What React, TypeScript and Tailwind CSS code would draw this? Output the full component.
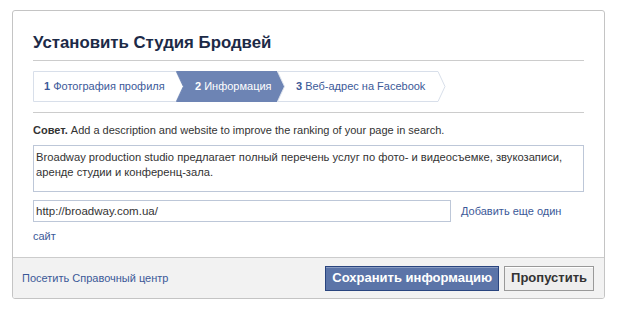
import React from 'react';

const font = { fontFamily: '"Liberation Sans", Arial, sans-serif' };

function Step({ n, label, width, active, first }: { n: number; label: string; width: number; active?: boolean; first?: boolean }) {
  const w = width;
  const pts = first
    ? `0.5,0.5 ${w - 8},0.5 ${w - 1},15.5 ${w - 8},30.5 0.5,30.5`
    : `0.5,0.5 ${w - 8},0.5 ${w - 1},15.5 ${w - 8},30.5 0.5,30.5 7.5,15.5`;
  return (
    <div className={`relative h-[31px] flex items-center ${first ? 'pl-[11px]' : '-ml-[8px] pl-[19px]'}`} style={{ width: w }}>
      <svg className="absolute inset-0" width={w} height={31} viewBox={`0 0 ${w} 31`}>
        <polygon
          points={pts}
          fill={active ? '#6d84b4' : '#ffffff'}
          stroke={active ? '#6d84b4' : '#d8dfea'}
          strokeWidth={1}
        />
      </svg>
      <span className={`relative text-[11px] whitespace-nowrap ${active ? 'text-white' : 'text-[#3b5998]'}`}>
        <b>{n}</b> {label}
      </span>
    </div>
  );
}

export default function App() {
  return (
    <div className="w-[617px] h-[313px] bg-white pt-[10px] pl-[12px]" style={font}>
      <div className="w-[593px] border border-[#c4c4c4] rounded-[3px] bg-white overflow-hidden">
        <div className="px-[20px]">
          {/* заголовок */}
          <div className="pt-[22px] pb-[7px] border-b border-[#cccccc]">
            <h1 className="text-[16.8px] leading-[20px] font-bold text-[#1c2a47]">Установить Студия Бродвей</h1>
          </div>

          {/* шаги */}
          <div className="pt-[10px] pb-[10px] border-b border-[#cccccc] flex">
            <Step n={1} label="Фотография профиля" width={151} first />
            <Step n={2} label="Информация" width={109} active />
            <Step n={3} label="Веб-адрес на Facebook" width={169} />
          </div>

          <p className="mt-[10px] text-[11px] leading-[14px] text-[#333333]">
            <b>Совет.</b> Add a description and website to improve the ranking of your page in search.
          </p>

          <div className="mt-[8px] h-[47px] border border-[#bdc7d8] px-[2px] pt-[4px] text-[11.2px] leading-[15px] text-[#333333]">
            Broadway production studio предлагает полный перечень услуг по фото- и видеосъемке, звукозаписи, аренде студии и конференц-зала.
          </div>

          <div className="mt-[8px] pb-[14px] text-[11px] leading-[14px]">
            <div className="flex items-center">
              <div className="w-[418px] h-[22px] border border-[#bdc7d8] px-[2px] flex items-center text-[11.5px] text-[#333333]">
                http://broadway.com.ua/
              </div>
              <a className="ml-[10px] text-[#3b5998]">Добавить еще один</a>
            </div>
            <a className="block mt-[7px] text-[#3b5998]">сайт</a>
          </div>
        </div>

        {/* нижняя панель */}
        <div className="bg-[#f2f2f2] border-t border-[#cccccc] pl-[9px] pr-[10px] h-[41px] flex items-center justify-between">
          <a className="text-[11px] text-[#3b5998]">Посетить Справочный центр</a>
          <div className="flex gap-[5px]">
            <button className="h-[25px] px-[6px] bg-[#5b74a8] border border-[#29447e] text-white text-[13px] font-bold shadow-[inset_0_1px_0_#8a9cc2]">
              Сохранить информацию
            </button>
            <button className="h-[25px] px-[6px] bg-[#eeeeee] border border-[#999999] text-[#333333] text-[13px] font-bold shadow-[inset_0_1px_0_#ffffff]">
              Пропустить
            </button>
          </div>
        </div>
      </div>
    </div>
  );
}
